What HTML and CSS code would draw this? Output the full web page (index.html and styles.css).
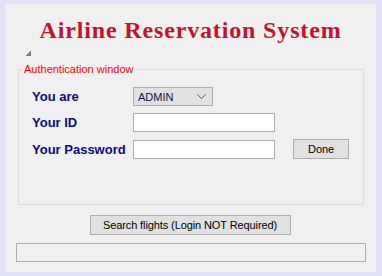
FILE: index.html
```html
<!DOCTYPE html>
<html lang="en">
<head>
    <meta charset="UTF-8">
    <title>Airline Reservation System</title>
    <link rel="stylesheet" href="styles.css">
</head>
<body>
    <div class="window">
        <h1 class="app-title">Airline Reservation System</h1>
        <div class="grip">
            <svg width="5" height="5" viewBox="0 0 5 5"><path d="M4 0h1v5H0V4h1V3h1V2h1V1h1z" fill="#7a7a7a"/></svg>
        </div>
        <fieldset class="auth-box">
            <legend class="auth-legend">Authentication window</legend>
            <div class="form-grid">
                <label class="form-label" for="role">You are</label>
                <div class="select-box" id="role">
                    <span>ADMIN</span>
                    <svg width="9" height="5" viewBox="0 0 9 5"><path d="M0.5 0.5l4 4 4-4" fill="none" stroke="#555" stroke-width="1"/></svg>
                </div>
                <span></span>

                <label class="form-label" for="userId">Your ID</label>
                <input type="text" class="text-input" id="userId">
                <span></span>

                <label class="form-label" for="password">Your Password</label>
                <input type="password" class="text-input" id="password">
                <button class="win-button done-button">Done</button>
            </div>
        </fieldset>
        <div class="search-row">
            <button class="win-button search-button">Search flights (Login NOT Required)</button>
        </div>
        <div class="status-bar"></div>
    </div>
</body>
</html>
```

FILE: styles.css
```css
:root {
    --frame: #e1e1f8;
    --panel: #f0f0f0;
    --title-red: #c8102e;
    --label-blue: #0a0a8a;
    --control-border: #adadad;
    --button-face: #e1e1e1;
}

body {
    margin: 0;
    background-color: var(--frame);
    font-family: 'Liberation Sans', Arial, sans-serif;
    font-size: 12px;
    color: #000;
}

.window {
    box-sizing: border-box;
    width: 371px;
    height: 268px;
    margin: 4px 6px 4px 5px;
    background-color: var(--panel);
    display: flex;
    flex-direction: column;
}

.app-title {
    margin: 13px 0 0 0;
    text-align: center;
    font-family: 'Liberation Serif', 'Times New Roman', serif;
    font-size: 24px;
    font-weight: bold;
    line-height: 26px;
    letter-spacing: 0.85px;
    color: var(--title-red);
}

.grip {
    height: 5px;
    margin: 8px 0 0 21px;
    line-height: 0;
}

.auth-box {
    box-sizing: border-box;
    width: 346px;
    height: 142px;
    margin: 7px 0 0 13px;
    padding: 12px 0 0 13px;
    border: 1px solid #dcdcdc;
}

.auth-legend {
    padding: 0 1px;
    margin-left: -9px;
    font-size: 11px;
    color: #ff0000;
}

.form-grid {
    display: grid;
    grid-template-columns: 101px 142px 74px;
    grid-template-rows: 19px 19px 20px;
    row-gap: 7px;
    align-items: center;
}

.form-label {
    font-size: 13px;
    font-weight: bold;
    color: var(--label-blue);
}

.select-box {
    box-sizing: border-box;
    width: 80px;
    height: 19px;
    padding: 0 6px 0 4px;
    border: 1px solid var(--control-border);
    background-color: var(--button-face);
    display: flex;
    align-items: center;
    justify-content: space-between;
    font-size: 11px;
    color: #101050;
}

.text-input {
    box-sizing: border-box;
    width: 142px;
    height: 19px;
    margin: 0;
    border: 1px solid var(--control-border);
    background-color: #fff;
}

.win-button {
    box-sizing: border-box;
    height: 20px;
    padding: 0;
    border: 1px solid var(--control-border);
    background-color: var(--button-face);
    font-family: 'Liberation Sans', Arial, sans-serif;
    font-size: 11px;
    letter-spacing: -0.1px;
    color: #000;
}

.done-button {
    width: 56px;
    margin-left: 18px;
}

.search-row {
    display: flex;
    justify-content: center;
    margin-top: 10px;
    padding-right: 1px;
}

.search-button {
    width: 201px;
}

.status-bar {
    box-sizing: border-box;
    width: 350px;
    height: 19px;
    margin: 8px 0 0 11px;
    border: 1px solid var(--control-border);
}
```
